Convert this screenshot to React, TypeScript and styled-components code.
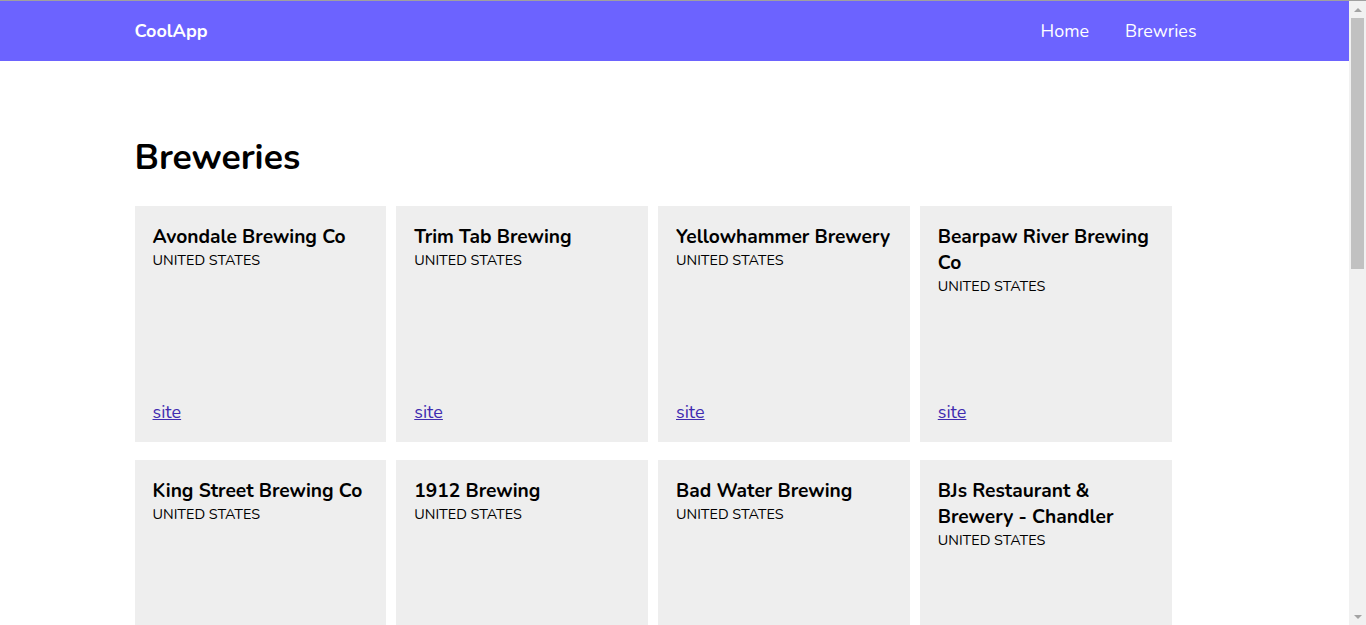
import React from "react";
import styled, { createGlobalStyle } from "styled-components";

const GlobalStyle = createGlobalStyle`
  html {
    scrollbar-width: none;
  }
  html::-webkit-scrollbar {
    display: none;
  }
  body {
    margin: 0;
    border-top: 1px solid #a0a0a0;
    font-family: "Nunito", Lato, "Noto Sans", sans-serif;
    color: #000;
    background: #fff;
  }
`;

const Page = styled.div`
  margin-right: 17px;
`;

const Header = styled.header`
  background: #6c63ff;
  height: 60px;
`;

const HeaderInner = styled.div`
  max-width: 1080px;
  height: 100%;
  margin: 0 auto;
  display: flex;
  align-items: center;
  justify-content: space-between;
`;

const Brand = styled.a`
  color: #fff;
  font-weight: 700;
  font-size: 18px;
  text-decoration: none;
`;

const Nav = styled.nav`
  display: flex;
  align-items: center;
`;

const NavLink = styled.a`
  color: #fff;
  font-size: 17.9px;
  text-decoration: none;
  padding: 0 18px;
`;

const Main = styled.main`
  max-width: 1080px;
  margin: 0 auto;
  padding: 73px 0 13px;
`;

const Title = styled.h1`
  margin: 0 0 24px;
  font-size: 35.5px;
  font-weight: 700;
  line-height: 48px;
`;

const Grid = styled.div`
  display: grid;
  grid-template-columns: repeat(4, 251.75px);
  grid-auto-rows: 236px;
  column-gap: 10px;
  row-gap: 18px;
`;

const Card = styled.article`
  background: #eeeeee;
  padding: 18px;
  display: flex;
  flex-direction: column;
  box-sizing: border-box;
`;

const CardTitle = styled.h2`
  margin: 0;
  font-size: 19.2px;
  font-weight: 700;
  line-height: 26px;
`;

const Country = styled.p`
  margin: 0;
  font-size: 14.4px;
  line-height: 20px;
  text-transform: uppercase;
`;

const SiteLink = styled.a`
  margin-top: auto;
  font-size: 18px;
  line-height: 24px;
  color: #3f2bb0;
  text-decoration: underline;
`;

const Scrollbar = styled.div`
  position: fixed;
  top: 1px;
  right: 0;
  bottom: 0;
  width: 17px;
  background: #f1f1f1;
  display: flex;
  flex-direction: column;
`;

const ScrollButton = styled.div`
  height: 17px;
  flex: none;
  display: flex;
  align-items: center;
  justify-content: center;
`;

const Arrow = styled.span<{ $down?: boolean }>`
  width: 0;
  height: 0;
  border-left: 4px solid transparent;
  border-right: 4px solid transparent;
  ${(p) =>
    p.$down
      ? "border-top: 4px solid #a3a3a3;"
      : "border-bottom: 4px solid #a3a3a3;"}
`;

const Track = styled.div`
  flex: 1;
`;

const Thumb = styled.div`
  margin: 0 2px;
  height: 251px;
  background: #c1c1c1;
`;

const breweries = [
  "Avondale Brewing Co",
  "Trim Tab Brewing",
  "Yellowhammer Brewery",
  "Bearpaw River Brewing Co",
  "King Street Brewing Co",
  "1912 Brewing",
  "Bad Water Brewing",
  "BJs Restaurant & Brewery - Chandler",
  "BJs Restaurant & Brewery - Peoria",
  "Dragoon Brewing Co",
  "Grand Canyon Brewing Company",
  "Mother Road Brewing Co",
  "Oak Creek Brewing Co",
  "Sonoran Brewing Company",
  "SanTan Brewing Co",
  "Four Peaks Brewing Co",
  "Borderlands Brewing Company",
  "Huss Brewing Co",
  "Arizona Wilderness Brewing Co",
  "Wren House Brewing Company",
];

export default function App() {
  return (
    <>
      <GlobalStyle />
      <Page>
        <Header>
          <HeaderInner>
            <Brand href="#">CoolApp</Brand>
            <Nav>
              <NavLink href="#">Home</NavLink>
              <NavLink href="#">Brewries</NavLink>
            </Nav>
          </HeaderInner>
        </Header>
        <Main>
          <Title>Breweries</Title>
          <Grid>
            {breweries.map((name) => (
              <Card key={name}>
                <CardTitle>{name}</CardTitle>
                <Country>United States</Country>
                <SiteLink href="#">site</SiteLink>
              </Card>
            ))}
          </Grid>
        </Main>
      </Page>
      <Scrollbar aria-hidden="true">
        <ScrollButton>
          <Arrow />
        </ScrollButton>
        <Track>
          <Thumb />
        </Track>
        <ScrollButton>
          <Arrow $down />
        </ScrollButton>
      </Scrollbar>
    </>
  );
}
